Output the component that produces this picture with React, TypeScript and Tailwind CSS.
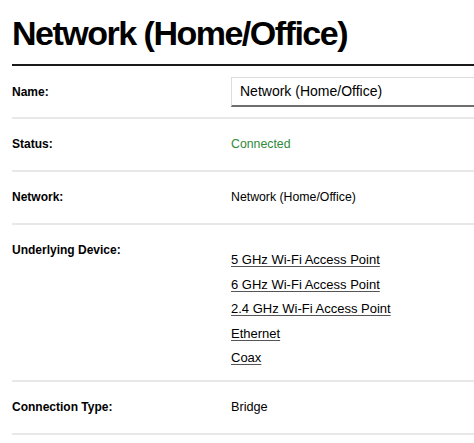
const devices = [
  '5 GHz Wi-Fi Access Point',
  '6 GHz Wi-Fi Access Point',
  '2.4 GHz Wi-Fi Access Point',
  'Ethernet',
  'Coax',
];

const Label = ({ children }: { children: React.ReactNode }) => (
  <div className="w-[219px] shrink-0 text-[12px] font-bold leading-[15px] text-black">{children}</div>
);

export default function App() {
  return (
    <div className="w-[474px] h-[443px] overflow-hidden bg-white pl-3 font-['Liberation_Sans',Arial,sans-serif] text-black">
      {/* Header */}
      <div className="pt-[16px] pb-[14px] border-b-2 border-[#1a1a1a]">
        <h1 className="text-[34px] font-bold leading-[34px] tracking-[-1.5px] whitespace-nowrap">Network (Home/Office)</h1>
      </div>

      {/* Name */}
      <div className="flex items-center pt-[11px] pb-[10px] border-b-2 border-[#e8e8e8]">
        <Label>Name:</Label>
        <div className="w-[260px] shrink-0 h-[30px] flex items-center pl-[8px] border-t border-l border-[#dcdcdc] border-b-2 border-b-[#6e6e6e] text-[14px] whitespace-nowrap">
          Network (Home/Office)
        </div>
      </div>

      {/* Status */}
      <div className="flex py-[18px] border-b-2 border-[#e8e8e8]">
        <Label>Status:</Label>
        <div className="text-[12.3px] leading-[15px] text-[#2f8a3a]">Connected</div>
      </div>

      {/* Network */}
      <div className="flex py-[18px] border-b-2 border-[#e8e8e8]">
        <Label>Network:</Label>
        <div className="text-[12.3px] leading-[15px]">Network (Home/Office)</div>
      </div>

      {/* Underlying Device */}
      <div className="flex pt-[18px] pb-[15px] border-b-2 border-[#e8e8e8]">
        <Label>Underlying Device:</Label>
        <div className="flex flex-col gap-[9.5px] pt-[9px]">
          {devices.map((d) => (
            <a key={d} href="#" className="text-[13px] leading-[15px] text-black underline underline-offset-2 decoration-[#555] whitespace-nowrap">
              {d}
            </a>
          ))}
        </div>
      </div>

      {/* Connection Type */}
      <div className="flex py-[18px] border-b-2 border-[#e8e8e8]">
        <Label>Connection Type:</Label>
        <div className="text-[12.7px] leading-[15px]">Bridge</div>
      </div>
    </div>
  );
}
